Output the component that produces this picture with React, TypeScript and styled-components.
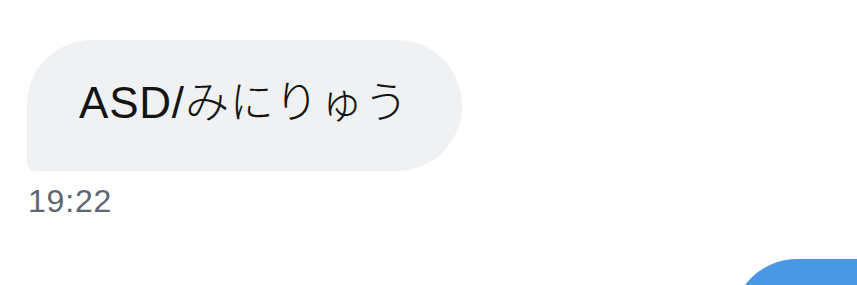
import React from "react";
import styled, { createGlobalStyle } from "styled-components";

const GlobalStyle = createGlobalStyle`
  html, body {
    margin: 0;
    padding: 0;
    background: #ffffff;
    overflow: hidden;
  }
  body {
    font-family: "Liberation Sans", Arial, "Noto Sans CJK JP", sans-serif;
  }
`;

const Page = styled.div`
  width: 857px;
  height: 285px;
  overflow: hidden;
  display: flex;
  flex-direction: column;
  padding-top: 40px;
  box-sizing: border-box;
`;

const IncomingGroup = styled.div`
  display: flex;
  flex-direction: column;
  align-items: flex-start;
  padding-left: 27px;
`;

const Bubble = styled.div`
  box-sizing: border-box;
  height: 131px;
  width: 435px;
  padding: 0 0 5px 52px;
  background: #eff1f3;
  border-radius: 65px 65px 65px 8px;
  color: #141414;
  font-family: "Liberation Sans", Arial, "Noto Sans CJK JP", sans-serif;
  font-size: 44px;
  font-weight: 300;
  letter-spacing: 0.8px;
  line-height: 126px;
  white-space: nowrap;
`;

const Time = styled.div`
  margin-top: 10px;
  padding-left: 1px;
  color: #5e6673;
  font-family: "Liberation Sans", Arial, sans-serif;
  font-size: 32px;
  letter-spacing: 0.8px;
  line-height: 40px;
`;

const OutgoingRow = styled.div`
  display: flex;
  justify-content: flex-end;
  margin-top: 38px;
`;

const SentBubble = styled.div`
  width: 200px;
  height: 131px;
  margin-right: -75px;
  background: #4a97e5;
  border-radius: 65px 65px 8px 65px;
  flex-shrink: 0;
`;

export default function App() {
  return (
    <>
      <GlobalStyle />
      <Page>
        <IncomingGroup>
          <Bubble>ASD/みにりゅう</Bubble>
          <Time>19:22</Time>
        </IncomingGroup>
        <OutgoingRow>
          <SentBubble />
        </OutgoingRow>
      </Page>
    </>
  );
}
